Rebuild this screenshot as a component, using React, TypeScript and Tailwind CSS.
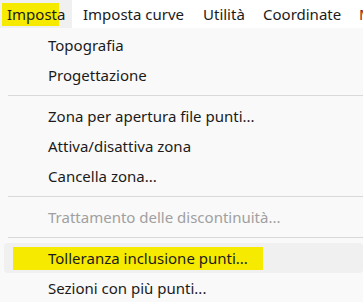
import React from 'react';

type Row =
  | { kind: 'item'; label: string; disabled?: boolean; active?: boolean }
  | { kind: 'sep' };

const rows: Row[] = [
  { kind: 'item', label: 'Topografia' },
  { kind: 'item', label: 'Progettazione' },
  { kind: 'sep' },
  { kind: 'item', label: 'Zona per apertura file punti...' },
  { kind: 'item', label: 'Attiva/disattiva zona' },
  { kind: 'item', label: 'Cancella zona...' },
  { kind: 'sep' },
  { kind: 'item', label: 'Trattamento delle discontinuità...', disabled: true },
  { kind: 'sep' },
  { kind: 'item', label: 'Tolleranza inclusione punti...', active: true },
  { kind: 'item', label: 'Sezioni con più punti...' },
];

const App: React.FC = () => {
  return (
    <div className="w-[363px] h-[302px] overflow-hidden bg-[#f9f9f9] font-['Noto_Sans',sans-serif] text-[15px] text-[#1b1b1b]">
      {/* Menu bar */}
      <div className="h-[28px] bg-white flex items-stretch whitespace-nowrap overflow-hidden">
        <div className="w-[72px] shrink-0 bg-[#f0f0f0] flex items-center pl-[2px]">
          <span className="bg-[#f5ea00] h-[23px] w-[57px] flex items-center pl-[5px]">Imposta</span>
        </div>
        <span className="w-[131px] shrink-0 flex items-center pl-[11px]">Imposta curve</span>
        <span className="w-[60px] shrink-0 flex items-center">Utilità</span>
        <span className="w-[96px] shrink-0 flex items-center">Coordinate</span>
        <span className="flex items-center text-[#8b1a1a]">M</span>
      </div>

      {/* Dropdown */}
      <div className="pt-[2px] whitespace-nowrap">
        {rows.map((row, i) =>
          row.kind === 'sep' ? (
            <div key={i} className="h-[11px] flex items-center pl-[8px]">
              <div className="h-px w-full bg-[#d9d9d9]" />
            </div>
          ) : row.active ? (
            <div key={i} className="h-[30px] ml-[4px] rounded-[4px] bg-[#f0f0f0] flex items-center pl-[9px]">
              <span className="bg-[#f5ea00] h-[23px] w-[250px] flex items-center pl-[35px]">{row.label}</span>
            </div>
          ) : (
            <div
              key={i}
              className={`h-[30px] flex items-center pl-[48px] ${row.disabled ? 'text-[#a0a0a0]' : ''}`}
            >
              {row.label}
            </div>
          )
        )}
      </div>
    </div>
  );
};

export default App;
